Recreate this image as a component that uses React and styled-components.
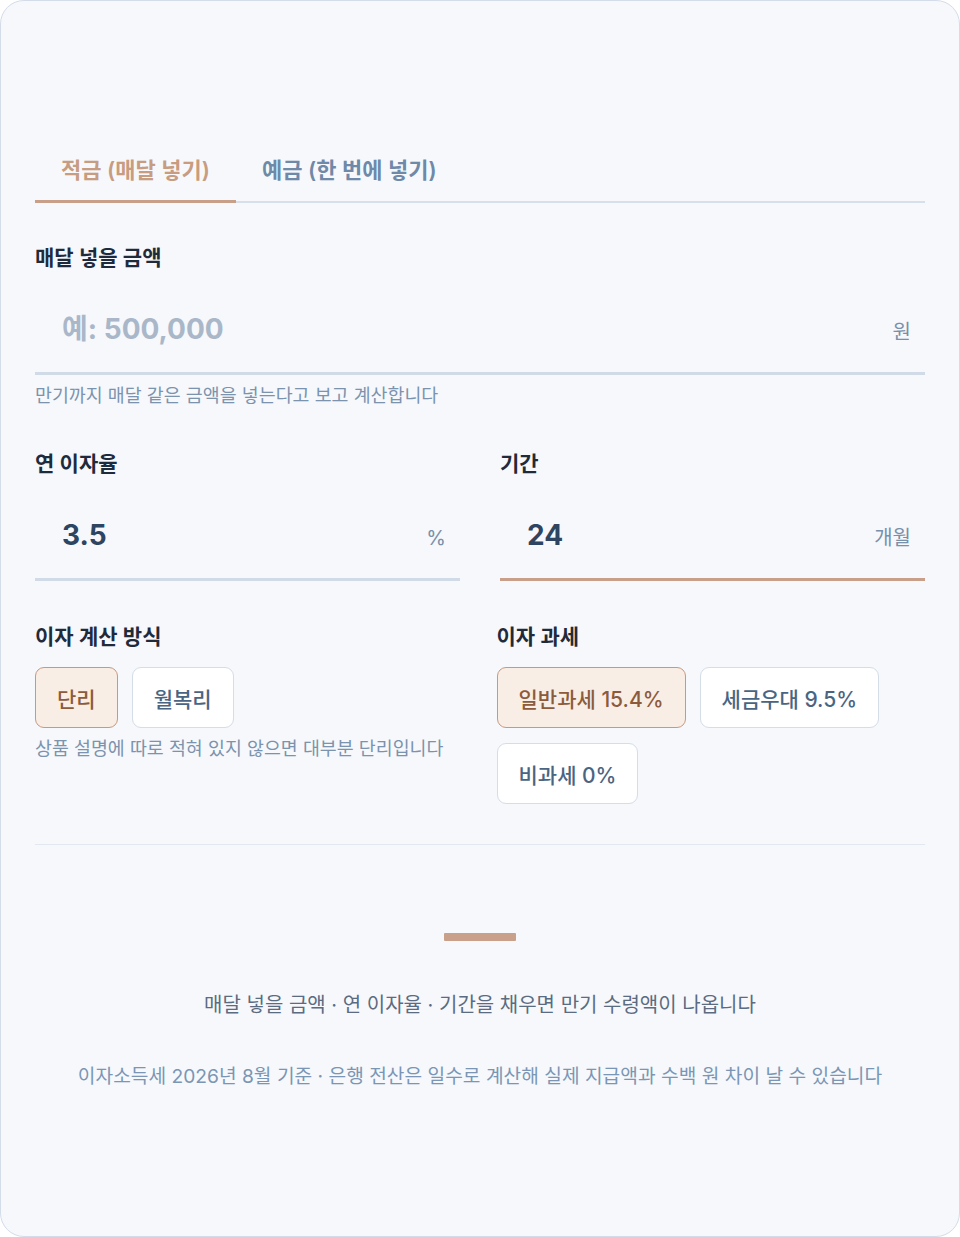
import React, { useState } from 'react'
import styled, { createGlobalStyle } from 'styled-components'

const GlobalStyle = createGlobalStyle`
  * { box-sizing: border-box; }
  body {
    margin: 0;
    background: #ffffff;
    font-family: Inter, "Noto Sans CJK KR", sans-serif;
  }
`

const Card = styled.div`
  min-height: 100vh;
  background: #f6f8fc;
  border: 1px solid #d3dce8;
  border-radius: 24px;
  padding: 139px 34px 60px;
`

const Tabs = styled.div`
  display: flex;
  border-bottom: 2px solid #d7dfea;
`

const Tab = styled.button`
  border: none;
  background: none;
  font-family: inherit;
  font-size: 22px;
  line-height: 30px;
  font-weight: 600;
  padding: 15px 26px 15px;
  margin-bottom: -2px;
  color: ${p => (p.$active ? '#c79c80' : '#6f89a8')};
  border-bottom: 3px solid ${p => (p.$active ? '#c8a08a' : 'transparent')};
  cursor: pointer;
`

const Field = styled.div`
  display: flex;
  flex-direction: column;
  min-width: 0;
  margin-top: ${p => p.$top || 0}px;
`

const Label = styled.div`
  font-size: 21px;
  line-height: 28px;
  font-weight: 600;
  color: #1f2b3b;
  margin-bottom: 12px;
`

const InputRow = styled.div`
  display: flex;
  align-items: center;
  padding: 27px 14px 25px 27px;
  border-bottom: 3px solid ${p => (p.$focus ? '#c8a08a' : '#d1dbe7')};
`

const Input = styled.input`
  flex: 1;
  width: 100%;
  min-width: 0;
  border: none;
  outline: none;
  background: transparent;
  font-family: inherit;
  font-size: 28px;
  line-height: 36px;
  height: 36px;
  font-weight: 700;
  color: #2d4561;
  padding: 0;
  &::placeholder {
    color: #a9b7c9;
  }
`

const Unit = styled.span`
  font-size: 20px;
  line-height: 28px;
  padding-top: 5px;
  color: #7890aa;
  margin-left: 12px;
  white-space: nowrap;
`

const Hint = styled.p`
  margin: 8px 0 0;
  font-size: 18.4px;
  line-height: 24px;
  color: #7b93ad;
`

const Columns = styled.div`
  display: grid;
  grid-template-columns: minmax(0, 1fr) minmax(0, 1fr);
  column-gap: ${p => p.$gap || 40}px;
  margin-top: ${p => p.$top || 0}px;
`

const ChipGroup = styled.div`
  display: flex;
  flex-wrap: wrap;
  gap: 15px 14px;
  margin-top: 4px;
`

const Chip = styled.button`
  height: 61px;
  padding: 0 21px;
  border-radius: 9px;
  font-family: inherit;
  font-size: 21px;
  font-weight: 500;
  cursor: pointer;
  background: ${p => (p.$active ? '#f8eee6' : '#ffffff')};
  border: 1.5px solid ${p => (p.$active ? '#c8997c' : '#d4dde8')};
  color: ${p => (p.$active ? '#8c5b3b' : '#4a6582')};
`

const Divider = styled.hr`
  border: none;
  border-top: 1px solid #e3e8f0;
  margin: 40px 0 0;
`

const Result = styled.div`
  display: flex;
  flex-direction: column;
  align-items: center;
  padding-top: 88px;
`

const AccentBar = styled.div`
  width: 72px;
  height: 8px;
  border-radius: 1px;
  background: #c9a08a;
`

const ResultText = styled.p`
  margin: 50px 0 0;
  font-size: 20px;
  line-height: 28px;
  color: #5b6b81;
`

const Note = styled.p`
  margin: 44px 0 0;
  font-size: 19.2px;
  line-height: 26px;
  color: #7a96b4;
  text-align: center;
`

export default function App() {
  const [tab, setTab] = useState('save')
  const [method, setMethod] = useState('simple')
  const [tax, setTax] = useState('normal')

  return (
    <>
      <GlobalStyle />
      <Card>
        <Tabs>
          <Tab $active={tab === 'save'} onClick={() => setTab('save')}>적금 (매달 넣기)</Tab>
          <Tab $active={tab === 'deposit'} onClick={() => setTab('deposit')}>예금 (한 번에 넣기)</Tab>
        </Tabs>

        <Field $top={41}>
          <Label>매달 넣을 금액</Label>
          <InputRow>
            <Input placeholder="예: 500,000" />
            <Unit>원</Unit>
          </InputRow>
          <Hint>만기까지 매달 같은 금액을 넣는다고 보고 계산합니다</Hint>
        </Field>

        <Columns $top={43}>
          <Field>
            <Label>연 이자율</Label>
            <InputRow>
              <Input defaultValue="3.5" />
              <Unit>%</Unit>
            </InputRow>
          </Field>
          <Field>
            <Label>기간</Label>
            <InputRow $focus>
              <Input defaultValue="24" />
              <Unit>개월</Unit>
            </InputRow>
          </Field>
        </Columns>

        <Columns $top={42} $gap={33}>
          <Field>
            <Label>이자 계산 방식</Label>
            <ChipGroup>
              <Chip $active={method === 'simple'} onClick={() => setMethod('simple')}>단리</Chip>
              <Chip $active={method === 'compound'} onClick={() => setMethod('compound')}>월복리</Chip>
            </ChipGroup>
            <Hint>상품 설명에 따로 적혀 있지 않으면 대부분 단리입니다</Hint>
          </Field>
          <Field>
            <Label>이자 과세</Label>
            <ChipGroup>
              <Chip $active={tax === 'normal'} onClick={() => setTax('normal')}>일반과세 15.4%</Chip>
              <Chip $active={tax === 'reduced'} onClick={() => setTax('reduced')}>세금우대 9.5%</Chip>
              <Chip $active={tax === 'free'} onClick={() => setTax('free')}>비과세 0%</Chip>
            </ChipGroup>
          </Field>
        </Columns>

        <Divider />

        <Result>
          <AccentBar />
          <ResultText>매달 넣을 금액 · 연 이자율 · 기간을 채우면 만기 수령액이 나옵니다</ResultText>
          <Note>이자소득세 2026년 8월 기준 · 은행 전산은 일수로 계산해 실제 지급액과 수백 원 차이 날 수 있습니다</Note>
        </Result>
      </Card>
    </>
  )
}
